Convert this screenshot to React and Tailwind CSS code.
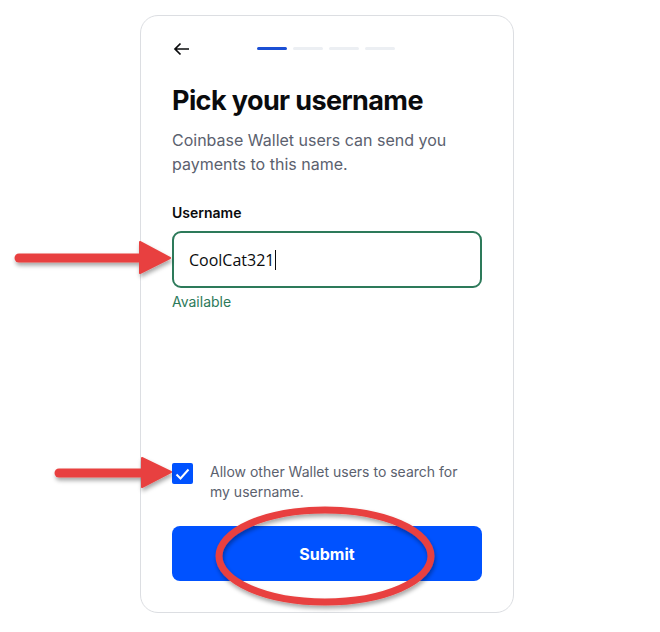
import React from 'react';

const Annotations = () => (
  <svg className="absolute left-0 top-0 pointer-events-none" width="660" height="632" viewBox="0 0 660 632">
    <defs>
      <filter id="shadow" x="-20%" y="-40%" width="140%" height="180%">
        <feDropShadow dx="1" dy="3" stdDeviation="2" floodColor="#000" floodOpacity="0.35" />
      </filter>
    </defs>
    <g filter="url(#shadow)" fill="#e8413f" stroke="#e8413f">
      <line x1="19" y1="258" x2="146" y2="258" strokeWidth="9" strokeLinecap="round" />
      <polygon points="140,242 170,258 140,273" strokeWidth="2" strokeLinejoin="round" />
      <line x1="59" y1="473" x2="147" y2="473" strokeWidth="9" strokeLinecap="round" />
      <polygon points="142,458 171,472 142,487" strokeWidth="2" strokeLinejoin="round" />
      <ellipse cx="325" cy="556" rx="106" ry="46" fill="none" strokeWidth="7" />
    </g>
  </svg>
);

export default function App() {
  return (
    <div className="relative w-[660px] h-[632px] bg-white" style={{ fontFamily: 'Inter, "Liberation Sans", sans-serif' }}>
      <div className="pl-[140px] pt-[15px]">
        <div className="w-[374px] h-[598px] border border-[#dcdee2] rounded-[18px] bg-white flex flex-col px-[31px] pt-[25px] pb-[31px]">
          <div className="flex items-center h-4">
            <svg width="17" height="14" viewBox="0 0 17 14" className="ml-[1px]">
              <path d="M16 7H2M7.5 1.5 2 7l5.5 5.5" fill="none" stroke="#0a0b0d" strokeWidth="1.7" />
            </svg>
            <div className="flex gap-[6px] ml-[67px] mt-[-2px]">
              <div className="w-[30px] h-[3px] rounded-full bg-[#1b4fd4]" />
              <div className="w-[30px] h-[3px] rounded-full bg-[#eceff3]" />
              <div className="w-[30px] h-[3px] rounded-full bg-[#eceff3]" />
              <div className="w-[30px] h-[3px] rounded-full bg-[#eceff3]" />
            </div>
          </div>

          <h1 className="mt-[27px] text-[27px] leading-[34px] font-bold tracking-[-0.6px] text-[#0a0b0d]">
            Pick your username
          </h1>
          <p className="mt-[10px] text-[16px] leading-[24px] text-[#5b616e]">
            Coinbase Wallet users can send you payments to this name.
          </p>

          <label className="mt-[27px] text-[14px] leading-5 font-semibold text-[#0a0b0d]">Username</label>
          <div className="mt-2 h-[57px] border-2 border-[#2d7a5a] rounded-[9px] flex items-center px-[15px]">
            <span className="text-[16px] text-[#0a0b0d]" style={{ fontFamily: '"Open Sans", "DejaVu Sans", sans-serif' }}>CoolCat321</span>
            <span className="w-px h-[20px] bg-[#0a0b0d] ml-[1px]" />
          </div>
          <div className="mt-1 text-[14px] leading-5 text-[#2d7a5a]">Available</div>

          <div className="flex-1" />

          <div className="flex items-start">
            <div className="w-[21px] h-[21px] rounded-[2px] bg-[#0052ff] flex items-center justify-center shrink-0">
              <svg width="15" height="12" viewBox="0 0 15 12">
                <path d="M1.5 6.5 5.5 10.5 13.5 1.5" fill="none" stroke="#fff" strokeWidth="2" />
              </svg>
            </div>
            <p className="ml-[17px] w-[262px] text-[14px] leading-5 text-[#5b616e] mt-[-1px]">
              Allow other Wallet users to search for my username.
            </p>
          </div>

          <button className="mt-6 h-[55px] w-full rounded-[8px] bg-[#0052ff] text-white text-[16px] font-bold">
            Submit
          </button>
        </div>
      </div>
      <Annotations />
    </div>
  );
}
